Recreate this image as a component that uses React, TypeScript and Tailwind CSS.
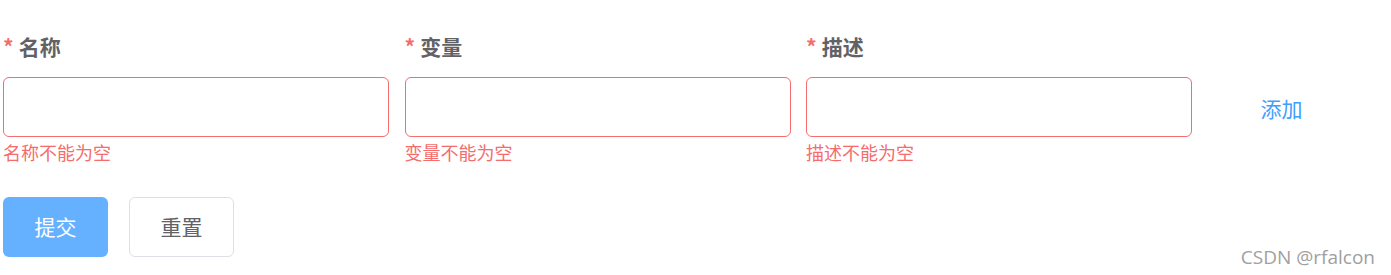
import React, { useState } from 'react';

// Element-style dynamic form row, scaled 1.5x
const fields = [
  { label: '名称', error: '名称不能为空' },
  { label: '变量', error: '变量不能为空' },
  { label: '描述', error: '描述不能为空' },
];

const cjk = { fontFamily: '"Noto Sans CJK SC", "Microsoft YaHei", sans-serif' };

const FormField: React.FC<{ label: string; error: string }> = ({ label, error }) => {
  const [value, setValue] = useState('');
  return (
    <div className="flex w-[386px] flex-col">
      <div className="flex h-[60px] items-center text-[21px] font-bold text-[#606266]">
        <span className="mr-[5px] text-[#f56c6c]">*</span>
        {label}
      </div>
      <input
        value={value}
        onChange={(e) => setValue(e.target.value)}
        className="h-[60px] w-full rounded-[6px] border border-[#f56c6c] px-[22px] text-[21px] text-[#606266] outline-none"
      />
      <div className="pt-[6px] text-[18px] leading-[18px] text-[#f56c6c]">{error}</div>
    </div>
  );
};

export default function App() {
  return (
    <div className="relative h-[275px] w-full bg-white pl-[3px] pt-[17px]" style={cjk}>
      <div className="flex gap-[15.5px]">
        {fields.map((f) => (
          <FormField key={f.label} label={f.label} error={f.error} />
        ))}
        <div className="flex w-[148px] flex-col">
          <div className="h-[60px]" />
          <button className="flex h-[60px] items-center justify-center pt-[4px] text-[21px] text-[#409eff]">
            添加
          </button>
        </div>
      </div>

      <div className="mt-[36px] flex gap-[21px]">
        <button className="h-[60px] w-[105px] rounded-[6px] bg-[#66b1ff] text-[21px] text-white">提交</button>
        <button className="h-[60px] w-[105px] rounded-[6px] border border-[#dcdfe6] bg-white text-[21px] text-[#606266]">
          重置
        </button>
      </div>

      <div
        className="absolute bottom-[6px] right-[16px] text-[19px] leading-[24px] text-[#a0a0a0]"
        style={{ fontFamily: '"Open Sans", "Noto Sans", sans-serif' }}
      >
        CSDN @rfalcon
      </div>
    </div>
  );
}
